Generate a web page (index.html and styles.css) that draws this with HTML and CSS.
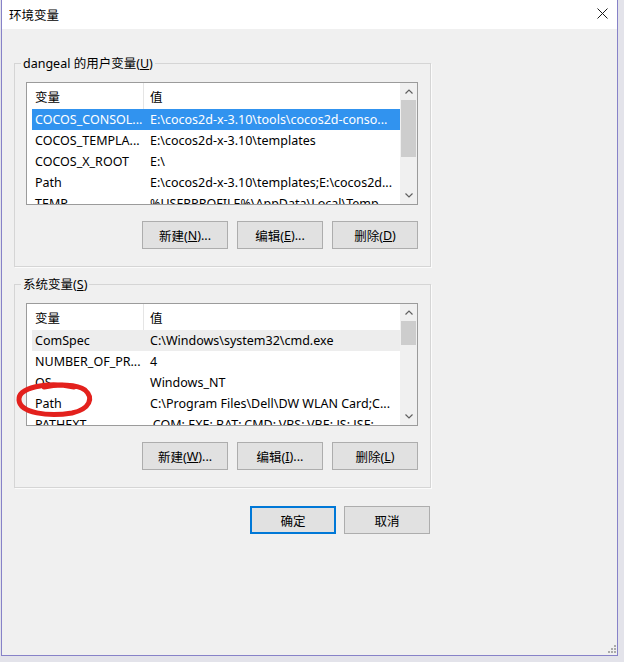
FILE: index.html
```html
<!DOCTYPE html>
<html lang="zh-CN">
<head>
<meta charset="utf-8">
<title>环境变量</title>
<link rel="stylesheet" href="styles.css">
</head>
<body>
<div class="window">
  <div class="titlebar">
    <span class="title">环境变量</span>
    <svg class="close" width="11" height="11" viewBox="0 0 11 11"><path d="M0.5 0.5 L10.5 10.5 M10.5 0.5 L0.5 10.5" stroke="#1a1a1a" stroke-width="1" fill="none"/></svg>
  </div>
  <div class="content">
    <section class="group">
      <div class="group-label">dangeal 的用户变量(<u>U</u>)</div>
      <div class="list">
        <div class="list-main">
          <div class="list-head"><div class="c1">变量</div><div class="c2">值</div></div>
          <div class="row selected"><div class="c1">COCOS_CONSOL...</div><div class="c2">E:\cocos2d-x-3.10\tools\cocos2d-conso...</div></div>
          <div class="row"><div class="c1">COCOS_TEMPLA...</div><div class="c2">E:\cocos2d-x-3.10\templates</div></div>
          <div class="row"><div class="c1">COCOS_X_ROOT</div><div class="c2">E:\</div></div>
          <div class="row"><div class="c1">Path</div><div class="c2">E:\cocos2d-x-3.10\templates;E:\cocos2d...</div></div>
          <div class="row"><div class="c1">TEMP</div><div class="c2">%USERPROFILE%\AppData\Local\Temp</div></div>
        </div>
        <div class="scrollbar">
          <div class="arrow"><svg width="8" height="5" viewBox="0 0 8 5"><polyline points="0.5,4.5 4,1 7.5,4.5" fill="none" stroke="#606060" stroke-width="1.2"/></svg></div>
          <div class="track"><div class="thumb thumb-user"></div></div>
          <div class="arrow"><svg width="8" height="5" viewBox="0 0 8 5"><polyline points="0.5,0.5 4,4 7.5,0.5" fill="none" stroke="#606060" stroke-width="1.2"/></svg></div>
        </div>
      </div>
      <div class="buttons">
        <button class="btn">新建(<u>N</u>)...</button>
        <button class="btn">编辑(<u>E</u>)...</button>
        <button class="btn">删除(<u>D</u>)</button>
      </div>
    </section>

    <section class="group group-sys">
      <div class="group-label">系统变量(<u>S</u>)</div>
      <div class="list">
        <div class="list-main">
          <div class="list-head"><div class="c1">变量</div><div class="c2">值</div></div>
          <div class="row hover"><div class="c1">ComSpec</div><div class="c2">C:\Windows\system32\cmd.exe</div></div>
          <div class="row"><div class="c1">NUMBER_OF_PR...</div><div class="c2">4</div></div>
          <div class="row"><div class="c1">OS</div><div class="c2">Windows_NT</div></div>
          <div class="row"><div class="c1">Path</div><div class="c2">C:\Program Files\Dell\DW WLAN Card;C...</div></div>
          <div class="row"><div class="c1">PATHEXT</div><div class="c2">.COM;.EXE;.BAT;.CMD;.VBS;.VBE;.JS;.JSE;...</div></div>
        </div>
        <div class="scrollbar">
          <div class="arrow"><svg width="8" height="5" viewBox="0 0 8 5"><polyline points="0.5,4.5 4,1 7.5,4.5" fill="none" stroke="#606060" stroke-width="1.2"/></svg></div>
          <div class="track"><div class="thumb thumb-sys"></div></div>
          <div class="arrow"><svg width="8" height="5" viewBox="0 0 8 5"><polyline points="0.5,0.5 4,4 7.5,0.5" fill="none" stroke="#606060" stroke-width="1.2"/></svg></div>
        </div>
      </div>
      <div class="buttons">
        <button class="btn">新建(<u>W</u>)...</button>
        <button class="btn">编辑(<u>I</u>)...</button>
        <button class="btn">删除(<u>L</u>)</button>
      </div>
    </section>

    <div class="dialog-buttons">
      <button class="btn btn-default">确定</button>
      <button class="btn">取消</button>
    </div>
  </div>

  <svg class="mark" width="82" height="42" viewBox="0 0 82 42"><path d="M58 7 C30 1, 2 8, 3 20 C4 33, 32 37, 56 33 C74 29, 78 18, 69 10 C61 4, 42 4, 28 7" fill="none" stroke="#e3211d" stroke-width="5" stroke-linecap="round"/></svg>
  <svg class="grip" width="8" height="8" viewBox="0 0 8 8"><rect x="6" y="0" width="2" height="2" fill="#aaa"/><rect x="3" y="3" width="2" height="2" fill="#aaa"/><rect x="6" y="3" width="2" height="2" fill="#aaa"/><rect x="0" y="6" width="2" height="2" fill="#aaa"/><rect x="3" y="6" width="2" height="2" fill="#aaa"/><rect x="6" y="6" width="2" height="2" fill="#aaa"/></svg>
</div>
</body>
</html>
```

FILE: styles.css
```css
* { box-sizing: border-box; }
html, body { margin: 0; padding: 0; }
body {
  background: #e3e3ea;
  width: 624px;
  height: 662px;
  overflow: hidden;
  font-family: "Noto Sans", "Noto Sans CJK SC", sans-serif;
  font-size: 12.5px;
  color: #000;
}
.window {
  position: relative;
  margin-left: 1px;
  width: 617px;
  height: 656px;
  background: #f0f0f0;
  border: 1px solid #8782c8;
  border-top: none;
}
.titlebar {
  height: 29px;
  background: #fff;
  display: flex;
  align-items: center;
  justify-content: space-between;
  padding: 0 9px 0 7px;
}
.title {
  font-family: "Noto Sans CJK SC", sans-serif;
  font-size: 12.5px;
}
.close { margin-bottom: 2px; }
.content {
  padding: 34px 0 0 12px;
}
.group {
  width: 417px;
  height: 204px;
  border: 1px solid #d5d5d5;
  box-shadow: 1px 1px 0 #fbfbfb;
}
.group-sys { margin-top: 17px; }
.group-label {
  width: fit-content;
  margin: -8px 0 0 6px;
  padding: 0 2px;
  background: #f0f0f0;
  line-height: 16px;
  white-space: nowrap;
}
.list {
  margin: 10px 0 0 11px;
  width: 392px;
  height: 123px;
  border: 1px solid #9b9b9b;
  background: #fff;
  display: flex;
}
.list-main {
  flex: 1;
  overflow: hidden;
  padding-left: 5px;
}
.list-head {
  height: 26px;
  display: flex;
  align-items: stretch;
}
.list-head .c1 {
  border-right: 1px solid #e5e5e5;
}
.list-head > div,
.row > div {
  display: flex;
  align-items: center;
  white-space: nowrap;
  overflow: hidden;
}
.c1 { width: 112px; flex: none; padding-left: 3px; }
.c2 { flex: 1; padding-left: 6px; }
.row {
  height: 21px;
  display: flex;
}
.row.selected { background: #3193ef; color: #fff; }
.row.hover { background: #ededed; }
.scrollbar {
  width: 17px;
  flex: none;
  background: #f0f0f0;
  display: flex;
  flex-direction: column;
}
.arrow {
  height: 17px;
  display: flex;
  align-items: center;
  justify-content: center;
}
.track { flex: 1; }
.thumb {
  margin: 0 1px;
  background: #cdcdcd;
}
.thumb-user { height: 57px; }
.thumb-sys { height: 24px; }
.buttons {
  display: flex;
  gap: 9px;
  margin: 16px 0 0 127px;
}
.btn {
  width: 86px;
  height: 28px;
  border: 1px solid #adadad;
  background: #e1e1e1;
  font-family: "Noto Sans", "Noto Sans CJK SC", sans-serif;
  font-size: 12.5px;
  color: #000;
  padding: 0;
  display: flex;
  align-items: center;
  justify-content: center;
}
.btn-default { border: 2px solid #0078d7; }
.dialog-buttons {
  width: 416px;
  margin-top: 18px;
  display: flex;
  justify-content: flex-end;
  gap: 8px;
}
.mark {
  position: absolute;
  left: 14px;
  top: 380px;
  overflow: visible;
}
.grip {
  position: absolute;
  right: 1px;
  bottom: 2px;
}
```
